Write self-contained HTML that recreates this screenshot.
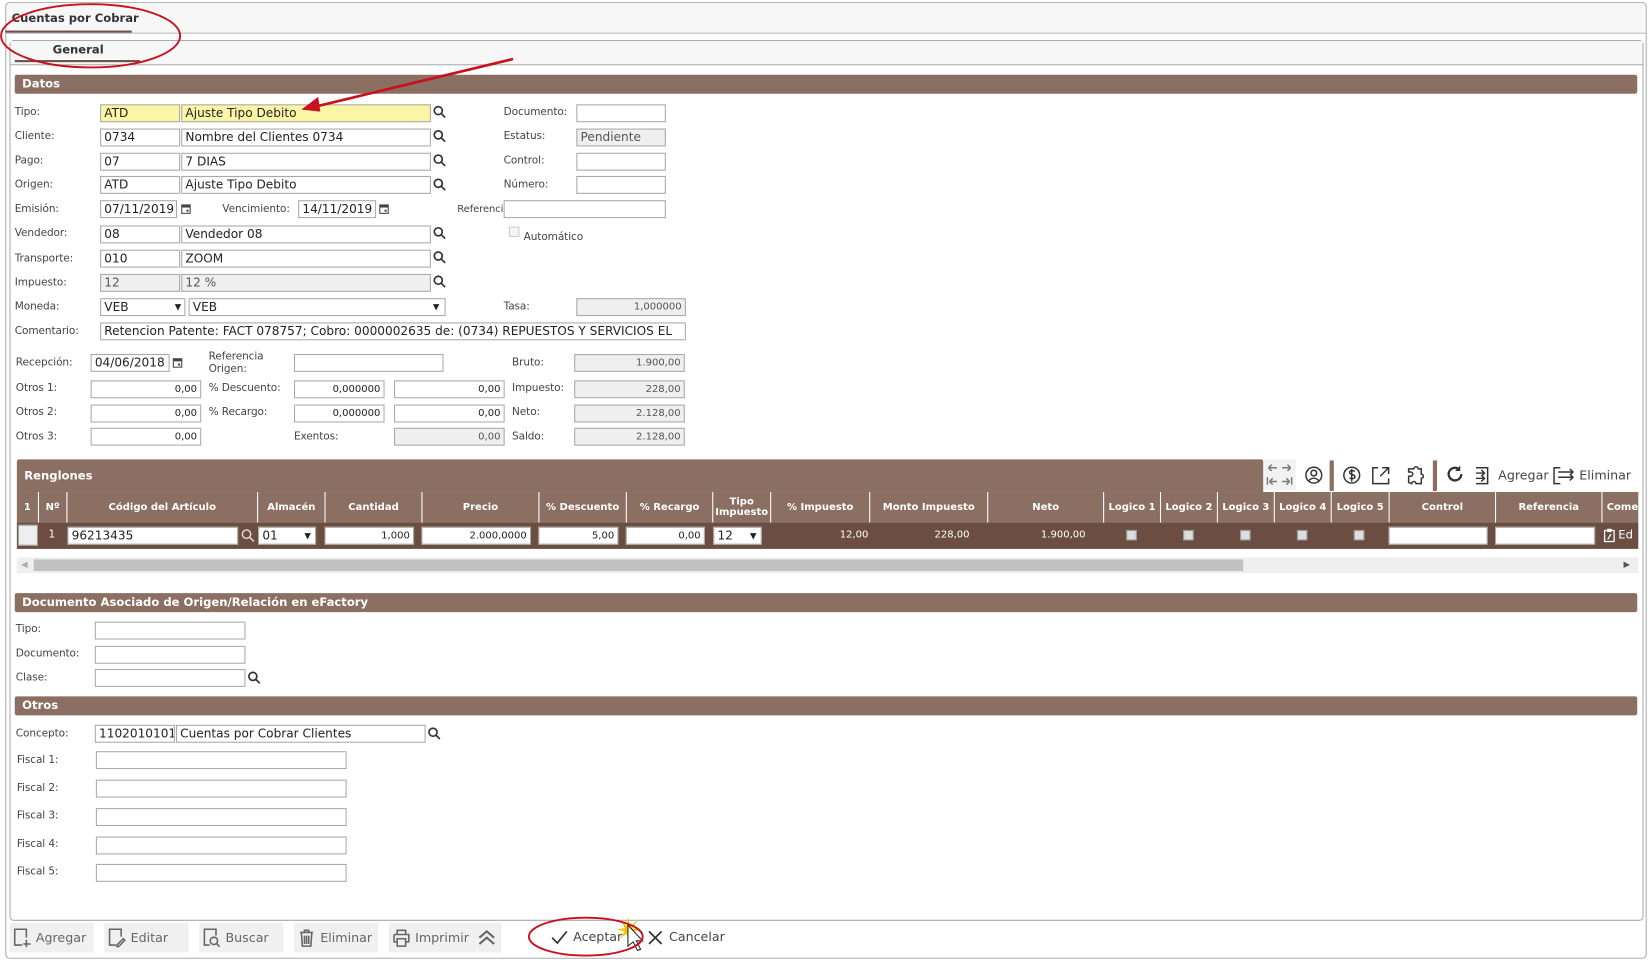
<!DOCTYPE html>
<html><head><meta charset="utf-8"><style>
*{box-sizing:border-box;margin:0;padding:0}
body{width:1652px;height:962px;overflow:hidden;background:#fff;font-family:"DejaVu Sans","Liberation Sans",sans-serif;}
#s{position:absolute;left:0;top:0;width:1568px;height:913px;transform:scale(1.05357);transform-origin:0 0;}
.a{position:absolute;white-space:nowrap}
.l{position:absolute;font-size:10px;color:#444;white-space:nowrap;line-height:12px;letter-spacing:-0.1px}
.i{position:absolute;height:17px;border:1px solid #a9a9a9;background:#fff;font-size:11.5px;color:#222;padding:0 3px;line-height:15px;white-space:nowrap;overflow:hidden}
.y{background:#fbf6a6}
.g{background:#efefef;color:#555}
.r{text-align:right;font-size:9.5px}
.bar{position:absolute;background:#8b6f62;color:#fff;font-weight:bold;font-size:11px;padding-left:7px;border-radius:2px}
.th{position:absolute;top:467px;height:29px;border-left:1px solid #fff;color:#fff;font-weight:bold;font-size:9.5px;display:flex;align-items:center;justify-content:center;text-align:center;line-height:10px}
.cb{position:absolute;top:503px;width:10px;height:10px;background:#ddd;border:1px solid #999}
.btn{position:absolute;top:876px;height:28px;background:#f0f0f0;font-size:12px;color:#666;display:flex;align-items:center;gap:4px;padding-left:3px}
</style></head><body><div id="s">
<div class="a" style="left:5px;top:2px;width:1558px;height:908px;border:1px solid #aaa;border-radius:4px;background:#fff"></div>
<div class="a" style="left:6px;top:3px;width:1556px;height:29px;background:#f7f7f7;border-bottom:1px solid #aaa;border-radius:4px 4px 0 0"></div>
<div class="a" style="left:11px;top:11px;font-size:11px;font-weight:bold;color:#333">Cuentas por Cobrar</div>
<div class="a" style="left:5px;top:29px;width:120px;height:2px;background:#6b5247"></div>
<div class="a" style="left:9px;top:38px;width:1551px;height:836px;border:1px solid #aaa;border-radius:4px"></div>
<div class="a" style="left:10px;top:39px;width:1549px;height:23px;background:#f7f7f7;border-bottom:1px solid #aaa"></div>
<div class="a" style="left:50px;top:41px;font-size:11px;font-weight:bold;color:#333">General</div>
<div class="a" style="left:14px;top:57px;width:119px;height:2px;background:#6b5247"></div>

<div class="bar" style="left:14px;top:71px;width:1540px;height:18px;line-height:18px">Datos</div>

<div class="l" style="left:14px;top:101px">Tipo:</div>
<div class="i y" style="left:95px;top:99px;width:76px">ATD</div><div class="i y" style="left:172px;top:99px;width:237px">Ajuste Tipo Debito</div>
<div class="l" style="left:14px;top:124px">Cliente:</div>
<div class="i" style="left:95px;top:122px;width:76px">0734</div><div class="i" style="left:172px;top:122px;width:237px">Nombre del Clientes 0734</div>
<div class="l" style="left:14px;top:147px">Pago:</div>
<div class="i" style="left:95px;top:145px;width:76px">07</div><div class="i" style="left:172px;top:145px;width:237px">7 DIAS</div>
<div class="l" style="left:14px;top:170px">Origen:</div>
<div class="i" style="left:95px;top:167px;width:76px">ATD</div><div class="i" style="left:172px;top:167px;width:237px">Ajuste Tipo Debito</div>
<div class="l" style="left:14px;top:193px">Emisión:</div>
<div class="i" style="left:95px;top:190px;width:73px">07/11/2019</div>
<div class="l" style="left:211px;top:193px">Vencimiento:</div>
<div class="i" style="left:283px;top:190px;width:74px">14/11/2019</div>
<div class="l" style="left:434px;top:193px;font-size:9.5px">Referencia:</div>
<div class="i" style="left:478px;top:190px;width:154px"></div>
<div class="l" style="left:14px;top:216px">Vendedor:</div>
<div class="i" style="left:95px;top:214px;width:76px">08</div><div class="i" style="left:172px;top:214px;width:237px">Vendedor 08</div>
<div class="a" style="left:483px;top:215px;width:10px;height:10px;border:1px solid #ccc;background:#f4f4f4"></div>
<div class="l" style="left:497px;top:220px">Automático</div>
<div class="l" style="left:14px;top:240px">Transporte:</div>
<div class="i" style="left:95px;top:237px;width:76px">010</div><div class="i" style="left:172px;top:237px;width:237px">ZOOM</div>
<div class="l" style="left:14px;top:263px">Impuesto:</div>
<div class="i g" style="left:95px;top:260px;width:76px">12</div><div class="i g" style="left:172px;top:260px;width:237px">12 %</div>
<div class="l" style="left:14px;top:286px">Moneda:</div>
<div class="i" style="left:95px;top:283px;width:81px">VEB<span style="position:absolute;right:3px;font-size:8px">▼</span></div>
<div class="i" style="left:179px;top:283px;width:244px">VEB<span style="position:absolute;right:5px;font-size:8px">▼</span></div>
<div class="l" style="left:478px;top:286px">Tasa:</div>
<div class="i g r" style="left:547px;top:283px;width:104px">1,000000</div>
<div class="l" style="left:14px;top:309px">Comentario:</div>
<div class="i" style="left:95px;top:306px;width:556px">Retencion Patente: FACT 078757; Cobro: 0000002635 de: (0734) REPUESTOS Y SERVICIOS EL</div>
<div class="l" style="left:478px;top:101px">Documento:</div><div class="i" style="left:547px;top:99px;width:85px"></div>
<div class="l" style="left:478px;top:124px">Estatus:</div><div class="i g" style="left:547px;top:122px;width:85px">Pendiente</div>
<div class="l" style="left:478px;top:147px">Control:</div><div class="i" style="left:547px;top:145px;width:85px"></div>
<div class="l" style="left:478px;top:170px">Número:</div><div class="i" style="left:547px;top:167px;width:85px"></div>

<svg class="a" style="left:410px;top:98px" width="16" height="200" viewBox="0 0 16 200" fill="none" stroke="#333" stroke-width="1.6">
<g id="m"><circle cx="6" cy="7" r="3.8"/><path d="M9 10l3.5 3.5"/></g>
<use href="#m" y="23"/><use href="#m" y="46"/><use href="#m" y="69"/><use href="#m" y="115"/><use href="#m" y="138"/><use href="#m" y="161"/>
</svg>
<svg class="a" style="left:171px;top:192px" width="11" height="12"><rect x="1" y="2" width="9" height="9" fill="#444"/><rect x="2" y="5" width="7" height="5" fill="#fff"/><rect x="6" y="7" width="2" height="2" fill="#444"/></svg>
<svg class="a" style="left:359px;top:192px" width="11" height="12"><rect x="1" y="2" width="9" height="9" fill="#444"/><rect x="2" y="5" width="7" height="5" fill="#fff"/><rect x="6" y="7" width="2" height="2" fill="#444"/></svg>
<svg class="a" style="left:163px;top:338px" width="11" height="12"><rect x="1" y="2" width="9" height="9" fill="#444"/><rect x="2" y="5" width="7" height="5" fill="#fff"/><rect x="6" y="7" width="2" height="2" fill="#444"/></svg>

<div class="l" style="left:15px;top:339px">Recepción:</div><div class="i" style="left:86px;top:336px;width:75px">04/06/2018</div>
<div class="l" style="left:198px;top:333px;line-height:12px">Referencia<br>Origen:</div><div class="i" style="left:279px;top:336px;width:142px"></div>
<div class="l" style="left:486px;top:339px">Bruto:</div><div class="i g r" style="left:545px;top:336px;width:105px">1.900,00</div>
<div class="l" style="left:15px;top:363px">Otros 1:</div><div class="i r" style="left:86px;top:361px;width:105px">0,00</div>
<div class="l" style="left:198px;top:363px">% Descuento:</div><div class="i r" style="left:279px;top:361px;width:86px">0,000000</div><div class="i r" style="left:374px;top:361px;width:105px">0,00</div>
<div class="l" style="left:486px;top:363px">Impuesto:</div><div class="i g r" style="left:545px;top:361px;width:105px">228,00</div>
<div class="l" style="left:15px;top:386px">Otros 2:</div><div class="i r" style="left:86px;top:384px;width:105px">0,00</div>
<div class="l" style="left:198px;top:386px">% Recargo:</div><div class="i r" style="left:279px;top:384px;width:86px">0,000000</div><div class="i r" style="left:374px;top:384px;width:105px">0,00</div>
<div class="l" style="left:486px;top:386px">Neto:</div><div class="i g r" style="left:545px;top:384px;width:105px">2.128,00</div>
<div class="l" style="left:15px;top:409px">Otros 3:</div><div class="i r" style="left:86px;top:406px;width:105px">0,00</div>
<div class="l" style="left:279px;top:409px">Exentos:</div><div class="i g r" style="left:374px;top:406px;width:105px">0,00</div>
<div class="l" style="left:486px;top:409px">Saldo:</div><div class="i g r" style="left:545px;top:406px;width:105px">2.128,00</div>

<div class="bar" style="left:16px;top:436px;width:1183px;height:31px;line-height:31px;border-radius:2px 2px 0 0">Renglones</div>
<div class="a" style="left:1200px;top:436px;width:30px;height:29px;background:#f2f2f2"></div>
<svg class="a" style="left:1200px;top:436px" width="360" height="30" fill="none" stroke="#333" stroke-width="1.4">
<path d="M4 8h8M4 8l3-3M4 8l3 3M17 8h8M25 8l-3-3M25 8l-3 3" stroke="#777"/>
<path d="M3 17v7M5 21h7M5 21l3-3M5 21l3 3M26 17v7M17 21h7M24 21l-3-3M24 21l-3 3" stroke="#777"/>
<circle cx="47" cy="15" r="7.5"/><circle cx="47" cy="13" r="2.7"/><path d="M42 20.5c3-3.5 7-3.5 10 0"/>
<rect x="62" y="1" width="4" height="29" fill="#8b6f62" stroke="none"/>
<circle cx="83" cy="15" r="7.5"/><path d="M86 11.5c-1-1-5-1.5-5 1s5 1.5 5 4-4 2-5 1M83 9v12"/>
<path d="M108 8h-5v15h15v-5M112 8h6v6M118 8l-8 8"/>
<path d="M137 22v-6h2a2 2 0 1 0 0-4h-2V9h5a2 2 0 1 1 4 0h3v5a2 2 0 1 1 0 4v5h-5a2 2 0 1 0-4 0z"/>
<rect x="160" y="1" width="4" height="29" fill="#8b6f62" stroke="none"/>
<path d="M187 14a6 6 0 1 1-2-4.5" stroke-width="2.2"/><path d="M186 6v5h-5" fill="#333" stroke="none"/>
<path d="M201 8h11v15h-11M201 13h8M206 10l3 3-3 3M201 18h8M206 15l3 3-3 3" />
<path d="M281 8h-6v15h6M279 12h14M290 9l3 3-3 3M279 17h14M290 14l3 3-3 3"/>
</svg>
<div class="a" style="left:1422px;top:444px;font-size:12px;color:#444">Agregar</div>
<div class="a" style="left:1499px;top:444px;font-size:12px;color:#444">Eliminar</div>
<div class="a" style="left:16px;top:467px;width:1539px;height:29px;background:#8b6f62"></div>
<div class="th" style="left:16px;width:20px;border-left:none">1</div>
<div class="th" style="left:36px;width:27px">Nº</div>
<div class="th" style="left:63px;width:181px">Código del Artículo</div>
<div class="th" style="left:244px;width:64px">Almacén</div>
<div class="th" style="left:308px;width:92px">Cantidad</div>
<div class="th" style="left:400px;width:111px">Precio</div>
<div class="th" style="left:511px;width:83px">% Descuento</div>
<div class="th" style="left:594px;width:82px">% Recargo</div>
<div class="th" style="left:676px;width:55px">Tipo<br>Impuesto</div>
<div class="th" style="left:731px;width:94px">% Impuesto</div>
<div class="th" style="left:825px;width:112px">Monto Impuesto</div>
<div class="th" style="left:937px;width:110px">Neto</div>
<div class="th" style="left:1047px;width:54px">Logico 1</div>
<div class="th" style="left:1101px;width:54px">Logico 2</div>
<div class="th" style="left:1155px;width:54px">Logico 3</div>
<div class="th" style="left:1209px;width:54px">Logico 4</div>
<div class="th" style="left:1263px;width:55px">Logico 5</div>
<div class="th" style="left:1318px;width:101px">Control</div>
<div class="th" style="left:1419px;width:101px">Referencia</div>
<div class="th" style="left:1520px;width:35px;justify-content:flex-start;padding-left:4px;overflow:hidden">Come</div>
<div class="a" style="left:16px;top:496px;width:1539px;height:25px;background:#6b4e41"></div>
<div class="a" style="left:17px;top:498px;width:19px;height:20px;background:#eee;border:1px solid #999"></div>
<div class="a" style="left:46px;top:502px;font-size:10px;color:#fff">1</div>
<div class="i" style="left:64px;top:500px;width:162px">96213435</div>
<svg class="a" style="left:228px;top:501px" width="14" height="14" fill="none" stroke="#ddd" stroke-width="1.4"><circle cx="6" cy="6" r="4"/><path d="M9 9l4 4"/></svg>
<div class="i" style="left:245px;top:500px;width:55px">01<span style="position:absolute;right:4px;font-size:8px">▼</span></div>
<div class="i r" style="left:308px;top:500px;width:85px">1,000</div>
<div class="i r" style="left:400px;top:500px;width:104px">2.000,0000</div>
<div class="i r" style="left:511px;top:500px;width:76px">5,00</div>
<div class="i r" style="left:594px;top:500px;width:75px">0,00</div>
<div class="i" style="left:677px;top:500px;width:46px">12<span style="position:absolute;right:4px;font-size:8px">▼</span></div>
<div class="a" style="left:797px;top:502px;font-size:9.5px;color:#fff">12,00</div>
<div class="a" style="left:887px;top:502px;font-size:9.5px;color:#fff">228,00</div>
<div class="a" style="left:988px;top:502px;font-size:9.5px;color:#fff">1.900,00</div>
<div class="cb" style="left:1069px"></div><div class="cb" style="left:1123px"></div><div class="cb" style="left:1177px"></div><div class="cb" style="left:1231px"></div><div class="cb" style="left:1285px"></div>
<div class="i" style="left:1318px;top:500px;width:94px"></div>
<div class="i" style="left:1419px;top:500px;width:95px"></div>
<svg class="a" style="left:1522px;top:501px" width="11" height="14" fill="none" stroke="#fff" stroke-width="1.2"><rect x="1" y="2.5" width="9" height="10.5"/><path d="M4 1.5h3v2H4zM4 11l3-5"/></svg>
<div class="a" style="left:1536px;top:501px;font-size:11px;color:#fff">Ed</div>
<div class="a" style="left:16px;top:529px;width:1539px;height:15px;background:#efefef"></div>
<div class="a" style="left:32px;top:531px;width:1148px;height:11px;background:#c1c1c1"></div>
<div class="a" style="left:20px;top:531px;font-size:8px;color:#aaa">◀</div>
<div class="a" style="left:1541px;top:531px;font-size:8px;color:#555">▶</div>

<div class="bar" style="left:14px;top:563px;width:1540px;height:18px;line-height:18px">Documento Asociado de Origen/Relación en eFactory</div>
<div class="l" style="left:15px;top:592px">Tipo:</div><div class="i" style="left:90px;top:590px;width:143px"></div>
<div class="l" style="left:15px;top:615px">Documento:</div><div class="i" style="left:90px;top:613px;width:143px"></div>
<div class="l" style="left:15px;top:638px">Clase:</div><div class="i" style="left:90px;top:635px;width:143px"></div>
<svg class="a" style="left:234px;top:636px" width="16" height="16" fill="none" stroke="#333" stroke-width="1.6"><circle cx="6" cy="6" r="3.8"/><path d="M9 9l3.5 3.5"/></svg>
<div class="bar" style="left:14px;top:661px;width:1540px;height:18px;line-height:18px">Otros</div>
<div class="l" style="left:15px;top:691px">Concepto:</div>
<div class="i" style="left:90px;top:688px;width:76px">1102010101</div><div class="i" style="left:167px;top:688px;width:237px">Cuentas por Cobrar Clientes</div>
<svg class="a" style="left:405px;top:689px" width="16" height="16" fill="none" stroke="#333" stroke-width="1.6"><circle cx="6" cy="6" r="3.8"/><path d="M9 9l3.5 3.5"/></svg>
<div class="l" style="left:16px;top:716px">Fiscal 1:</div><div class="i" style="left:91px;top:713px;width:238px"></div>
<div class="l" style="left:16px;top:743px">Fiscal 2:</div><div class="i" style="left:91px;top:740px;width:238px"></div>
<div class="l" style="left:16px;top:769px">Fiscal 3:</div><div class="i" style="left:91px;top:767px;width:238px"></div>
<div class="l" style="left:16px;top:796px">Fiscal 4:</div><div class="i" style="left:91px;top:794px;width:238px"></div>
<div class="l" style="left:16px;top:822px">Fiscal 5:</div><div class="i" style="left:91px;top:820px;width:238px"></div>

<div class="btn" style="left:9px;width:80px"><svg width="18" height="20" fill="none" stroke="#666" stroke-width="1.5"><path d="M9 17H2V2h11v8M13 12v7M10 16h7"/></svg>Agregar</div>
<div class="btn" style="left:99px;width:80px"><svg width="18" height="20" fill="none" stroke="#666" stroke-width="1.5"><path d="M8 17H2V2h11v7M9 17l6-6 1.5 1.5-6 6H9z"/></svg>Editar</div>
<div class="btn" style="left:189px;width:80px"><svg width="18" height="20" fill="none" stroke="#666" stroke-width="1.5"><path d="M7 17H2V2h11v6"/><circle cx="11" cy="13" r="3.5"/><path d="M13.5 15.5l3 3"/></svg>Buscar</div>
<div class="btn" style="left:279px;width:80px"><svg width="18" height="20" fill="none" stroke="#666" stroke-width="1.5"><path d="M3 5h12M7 5V3h4v2M4 5l1 13h8l1-13M7 8v8M9 8v8M11 8v8"/></svg>Eliminar</div>
<div class="btn" style="left:369px;width:80px"><svg width="18" height="20" fill="none" stroke="#666" stroke-width="1.5"><path d="M5 7V3h8v4M2 7h14v7h-3M5 14H2V7M5 11h8v7H5z"/></svg>Imprimir</div>
<div class="btn" style="left:449px;width:27px"><svg width="20" height="20" fill="none" stroke="#666" stroke-width="2"><path d="M3 10l7-6 7 6M3 16l7-6 7 6"/></svg></div>
<svg class="a" style="left:522px;top:882px" width="18" height="16" fill="none" stroke="#333" stroke-width="1.6"><path d="M2 8l5 5 9-11"/></svg>
<div class="a" style="left:544px;top:882px;font-size:12px;color:#444">Aceptar</div>
<svg class="a" style="left:614px;top:882px" width="16" height="16" fill="none" stroke="#333" stroke-width="1.6"><path d="M2 2l12 12M14 2L2 14"/></svg>
<div class="a" style="left:635px;top:882px;font-size:12px;color:#444">Cancelar</div>
<svg class="a" style="left:586px;top:868px" width="30" height="40"><path d="M10 2l2 9 8-6-6 8 9 2-9 1 5 8-7-6-1 9-2-9-7 5 5-7-8-2 8-1-4-8 6 6z" fill="#f5c400"/><path d="M10 10v20l5-4 4 8 3-1-4-8h6z" fill="#fff" stroke="#222"/></svg>

<svg class="a" style="left:0;top:0" width="700" height="913" fill="none">
<ellipse cx="86" cy="34" rx="85" ry="30" stroke="#c8101e" stroke-width="1.8"/>
<ellipse cx="556" cy="889" rx="54" ry="18" stroke="#c8101e" stroke-width="1.8"/>
<path d="M487 56L300 101" stroke="#c8101e" stroke-width="2.5"/>
<path d="M286 104l16-12 2 14z" fill="#c8101e"/>
</svg>
</div></body></html>
